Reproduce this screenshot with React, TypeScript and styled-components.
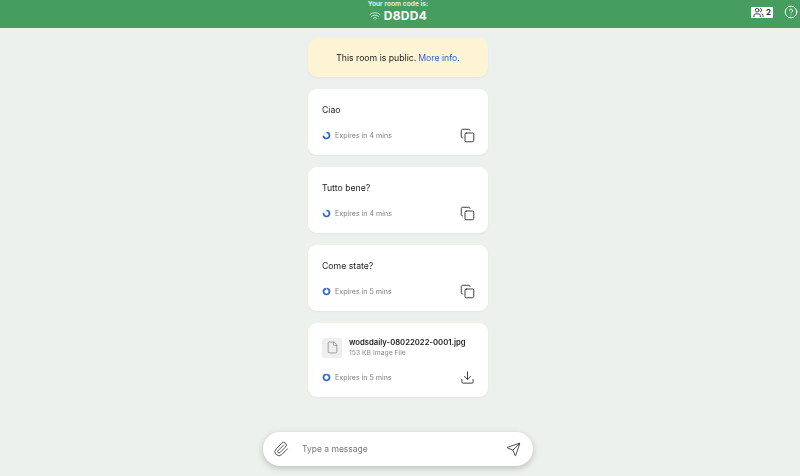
import React from "react";
import styled, { createGlobalStyle } from "styled-components";
import { Copy, Download, File, HelpCircle, Paperclip, Send, Users, Wifi } from "lucide-react";

const GlobalStyle = createGlobalStyle`
  html, body {
    margin: 0;
    padding: 0;
    height: 100%;
    background: #edf1ed;
    font-family: Inter, "Liberation Sans", sans-serif;
    overflow: hidden;
  }
`;

function Progress({ value }: { value: number }) {
  const c = 2 * Math.PI * 3;
  return (
    <svg width="9" height="9" viewBox="0 0 9 9">
      <circle cx="4.5" cy="4.5" r="3" fill="none" stroke="#e6ecfa" strokeWidth="1.7" />
      <circle
        cx="4.5"
        cy="4.5"
        r="3"
        fill="none"
        stroke="#2f63d6"
        strokeWidth="1.7"
        strokeDasharray={`${c * value} ${c}`}
        transform="rotate(-90 4.5 4.5)"
      />
    </svg>
  );
}

function Expiry({ mins, value }: { mins: number; value: number }) {
  return (
    <ExpiryRow>
      <Progress value={value} />
      <span>Expires in {mins} mins</span>
    </ExpiryRow>
  );
}

const messages = [
  { text: "Ciao", mins: 4, value: 0.72 },
  { text: "Tutto bene?", mins: 4, value: 0.75 },
  { text: "Come state?", mins: 5, value: 0.94 },
];

export default function App() {
  return (
    <>
      <GlobalStyle />
      <Page>
        <Header>
          <RoomCode>
            <RoomLabel>Your room code is:</RoomLabel>
            <CodeRow>
              <Wifi size={12} strokeWidth={1.4} />
              <span>D8DD4</span>
            </CodeRow>
          </RoomCode>
          <HeaderActions>
            <PeopleBadge>
              <Users size={11} strokeWidth={2} />
              <span>2</span>
            </PeopleBadge>
            <HelpCircle size={14} strokeWidth={1.6} color="#fff" />
          </HeaderActions>
        </Header>

        <Feed>
          <Notice>
            This room is public. <NoticeLink>More info.</NoticeLink>
          </Notice>
          {messages.map((m) => (
            <Card key={m.text}>
              <MessageText>{m.text}</MessageText>
              <CardFooter>
                <Expiry mins={m.mins} value={m.value} />
                <Copy size={15} strokeWidth={1.5} color="#333" />
              </CardFooter>
            </Card>
          ))}
          <FileCard>
            <FileRow>
              <FileThumb>
                <File size={13} strokeWidth={1.5} color="#8f8f8f" />
              </FileThumb>
              <div>
                <FileName>wodsdaily-08022022-0001.jpg</FileName>
                <FileMeta>153 KB Image File</FileMeta>
              </div>
            </FileRow>
            <CardFooter>
              <Expiry mins={5} value={0.96} />
              <Download size={15} strokeWidth={1.5} color="#333" />
            </CardFooter>
          </FileCard>
        </Feed>

        <Composer>
          <Paperclip size={16} strokeWidth={1.5} color="#555" />
          <Placeholder>Type a message</Placeholder>
          <Send size={15} strokeWidth={1.4} color="#333" />
        </Composer>
      </Page>
    </>
  );
}

const Page = styled.div`
  width: 800px;
  height: 476px;
  display: flex;
  flex-direction: column;
  align-items: center;
  will-change: opacity;
`;

const Header = styled.header`
  position: relative;
  width: 100%;
  height: 28px;
  flex-shrink: 0;
  background: #459d5f;
  color: #fff;
  display: flex;
  justify-content: center;
  padding-right: 4px;
  box-sizing: border-box;
`;

const RoomCode = styled.div`
  display: flex;
  flex-direction: column;
  align-items: center;
`;

const RoomLabel = styled.div`
  font-size: 6.7px;
  font-weight: 600;
  line-height: 9px;
  color: #e4f2e8;
`;

const CodeRow = styled.div`
  display: flex;
  align-items: center;
  gap: 3px;
  font-size: 12px;
  font-weight: 700;
  line-height: 14px;
  letter-spacing: 0.3px;
`;

const HeaderActions = styled.div`
  position: absolute;
  right: 2px;
  top: 5px;
  display: flex;
  align-items: center;
  gap: 11px;
`;

const PeopleBadge = styled.div`
  display: flex;
  align-items: center;
  gap: 2px;
  height: 11px;
  padding: 0 2px;
  background: #fff;
  border-radius: 1px;
  color: #333;
  font-size: 8px;
  font-weight: 700;
`;

const Feed = styled.main`
  width: 180px;
  margin-right: 4px;
  display: flex;
  flex-direction: column;
  gap: 12px;
  padding-top: 10px;
`;

const Notice = styled.div`
  height: 39px;
  border-radius: 9px;
  background: #fdf3d5;
  box-shadow: 0 1px 2px rgba(0, 0, 0, 0.05);
  display: flex;
  align-items: center;
  justify-content: center;
  gap: 2px;
  font-size: 8.7px;
  color: #222;
  white-space: nowrap;
`;

const NoticeLink = styled.span`
  color: #2f63d6;
`;

const Card = styled.section`
  height: 66px;
  box-sizing: border-box;
  padding: 15px 13px 12px 14px;
  border-radius: 9px;
  background: #fff;
  box-shadow: 0 1px 2px rgba(0, 0, 0, 0.05);
  display: flex;
  flex-direction: column;
  justify-content: space-between;
`;

const FileCard = styled(Card)`
  height: 74px;
  padding-top: 14px;
`;

const MessageText = styled.div`
  font-size: 8.7px;
  line-height: 12px;
  color: #222;
`;

const CardFooter = styled.div`
  display: flex;
  align-items: center;
  justify-content: space-between;
`;

const ExpiryRow = styled.div`
  display: flex;
  align-items: center;
  gap: 4px;
  font-size: 7.1px;
  color: #808080;
`;

const FileRow = styled.div`
  display: flex;
  align-items: center;
  gap: 7px;
`;

const FileThumb = styled.div`
  width: 20px;
  height: 20px;
  border-radius: 3px;
  background: #eeeeee;
  display: flex;
  align-items: center;
  justify-content: center;
  flex-shrink: 0;
`;

const FileName = styled.div`
  font-size: 7.7px;
  font-weight: 600;
  line-height: 11px;
  color: #222;
  white-space: nowrap;
`;

const FileMeta = styled.div`
  font-size: 6.8px;
  line-height: 10px;
  color: #8a8a8a;
`;

const Composer = styled.div`
  position: fixed;
  left: 263px;
  top: 432px;
  width: 270px;
  height: 34px;
  box-sizing: border-box;
  padding: 0 12px 0 10px;
  border-radius: 17px;
  background: #fff;
  box-shadow: 0 2px 6px rgba(0, 0, 0, 0.22);
  display: flex;
  align-items: center;
`;

const Placeholder = styled.div`
  flex: 1;
  margin-left: 13px;
  font-size: 8.5px;
  color: #777;
`;
